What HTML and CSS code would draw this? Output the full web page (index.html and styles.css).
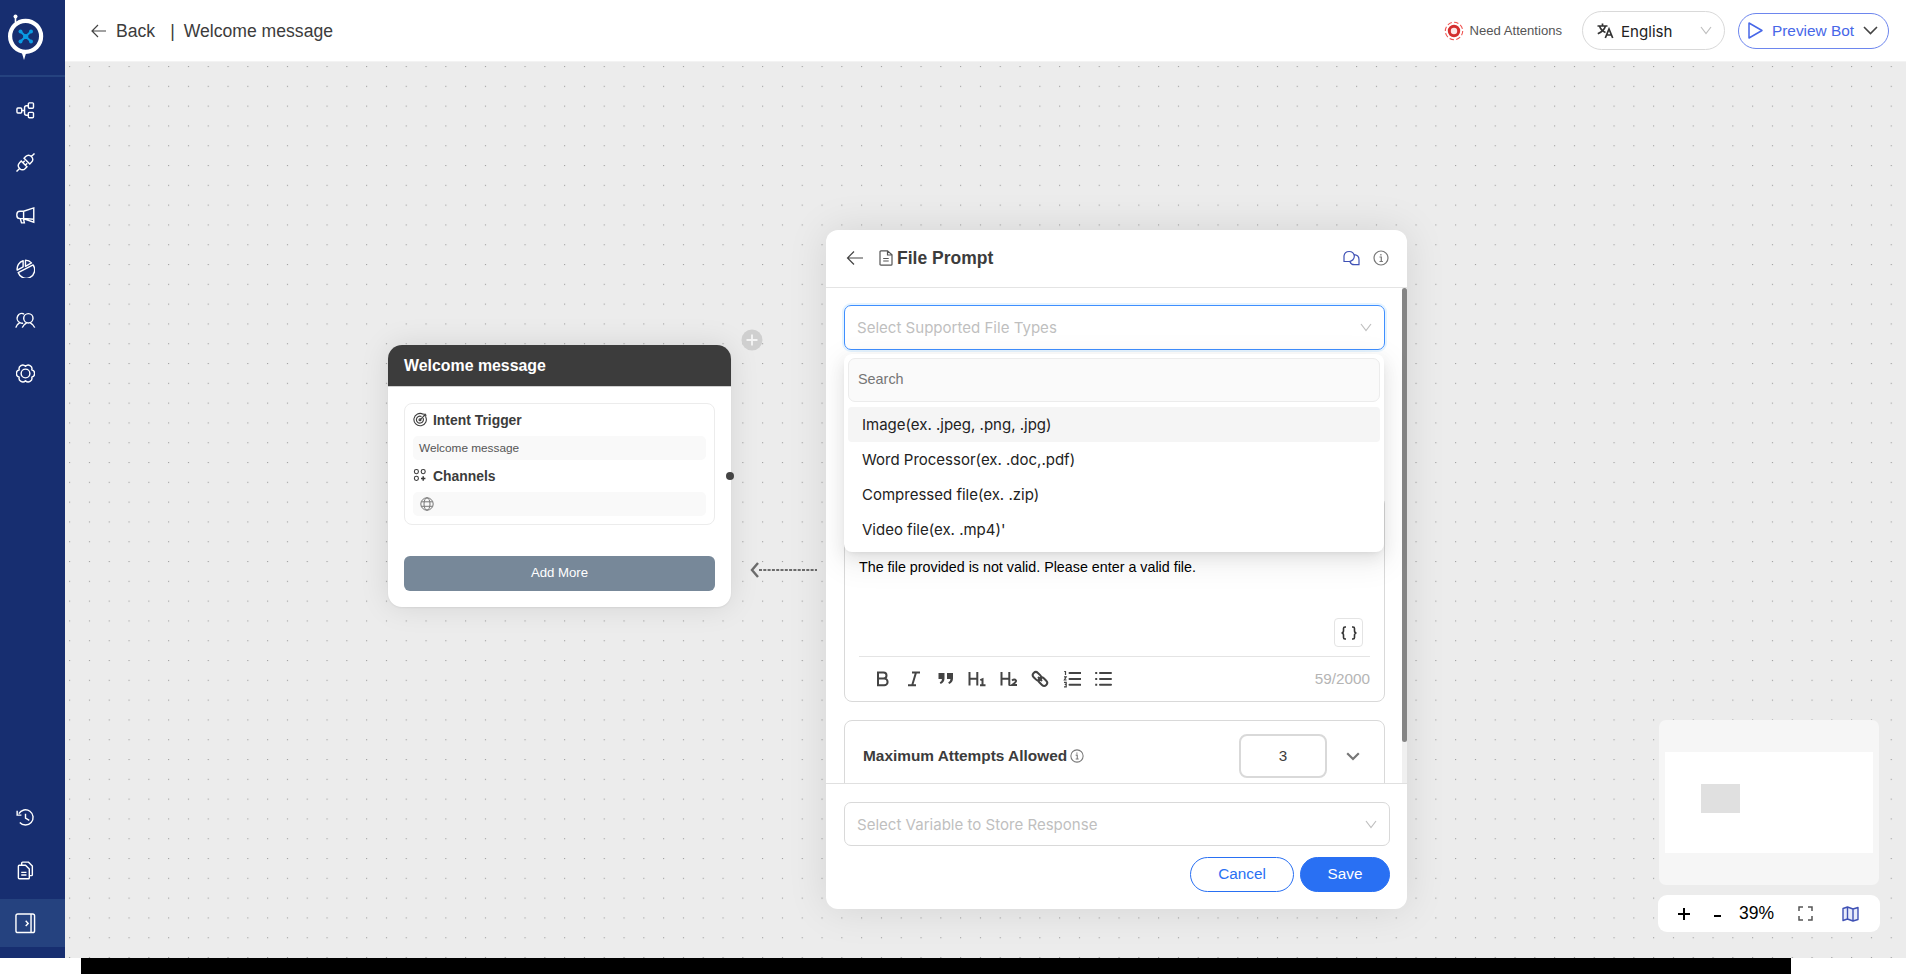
FILE: index.html
```html
<!DOCTYPE html>
<html lang="en">
<head>
    <meta charset="UTF-8">
    <meta name="viewport" content="width=device-width, initial-scale=1.0">
    <title>Welcome message</title>
    <link rel="stylesheet" href="styles.css">
</head>
<body>
    <div class="app">
        <nav class="sidebar">
            <div class="logo">
                <svg width="38" height="48" viewBox="0 0 38 48">
                    <path d="M8.5 3v8" stroke="#fff" stroke-width="1.6"/>
                    <circle cx="8.5" cy="2.5" r="2" fill="#fff"/>
                    <path d="M14 36l3 10 3-10z" fill="#fff"/>
                    <circle cx="18.6" cy="22.3" r="15.5" fill="#172e70" stroke="#fff" stroke-width="4.2"/>
                    <path d="M13.5 17.5l10.5 10M24 17.5l-10.5 10" stroke="#0a9be3" stroke-width="2"/>
                    <g fill="#0a9be3"><circle cx="13.5" cy="17.5" r="2"/><circle cx="24" cy="17.5" r="2"/><circle cx="13.5" cy="27.5" r="2"/><circle cx="24" cy="27.5" r="2"/><circle cx="18.7" cy="22.5" r="2.6"/></g>
                </svg>
            </div>
            <a class="nav-item"><svg class="icon" viewBox="0 0 20 20"><rect x="1" y="7.4" width="5" height="5.2" rx="1"/><rect x="13" y="2" width="5.4" height="5.6" rx="1"/><rect x="13" y="12" width="5.4" height="5.6" rx="1"/><path d="M6 10h3M13 5h-2q-2 0-2 2v6q0 2 2 2h2"/></svg></a>
            <a class="nav-item"><svg class="icon" viewBox="0 0 20 20"><path d="M.5 19.500L3.800 16.200M3.800 16.200q-3-3 0-6L5.500 8.500l6 6-1.700 1.700q-3 3-6 0zM19.500.5L16.200 3.800M16.200 3.800q-3-3-6 0L8.500 5.500l6 6 1.700-1.700q3-3 0-6zM7.200 10.200l2-2M9.800 12.800l2-2"/></svg></a>
            <a class="nav-item"><svg class="icon" viewBox="0 0 20 20"><path d="M8 5.500L18.700 2v15L8 13.300zM8 5.500H4.200a3.300 3.300 0 0 0-3.300 3.300v1.200a3.300 3.300 0 0 0 3.300 3.300H8M8 5.500v7.800M4.500 13.300l1.300 4.500h3l-1-4.500M8 13l10.500 1"/></svg></a>
            <a class="nav-item"><svg class="icon" viewBox="0 0 20 20"><path d="M2.300 14.300L18 6.300A8.900 8.900 0 1 1 2.300 14.300zM7.500 1.800V8.200L1.300 11.700A8.900 8.900 0 0 1 7.500 1.800zM10 7.800V1.200a8.900 8.900 0 0 1 6.300 2.900z" stroke-linejoin="round"/></svg></a>
            <a class="nav-item"><svg class="icon wide" viewBox="0 0 22 20"><circle cx="14" cy="7.700" r="4.900"/><path d="M7.600 17.500q1-3.300 4.600-5.100M20.700 17.500q-1-3.300-4.700-5.100M9.500 3.200A4.900 4.900 0 0 0 5 12.200Q1.600 14 .8 17.500M5 12.200q2 1 3.500.5"/></svg></a>
            <a class="nav-item"><svg class="icon" viewBox="0 0 20 20"><circle cx="10" cy="10" r="4.600"/><path d="M10 2.400A3.900 3.900 0 0 1 16.600 6.200A3.900 3.900 0 0 1 16.600 13.800A3.900 3.900 0 0 1 10 17.600A3.900 3.900 0 0 1 3.400 13.800A3.900 3.900 0 0 1 3.400 6.200A3.900 3.900 0 0 1 10 2.400z" stroke-linejoin="round"/></svg></a>
            <div class="nav-bottom">
                <a class="nav-item"><svg class="icon" viewBox="0 0 20 20"><path d="M4 15.200A8 8 0 1 0 3 6M1.200 3v4.500h4.500M10 6v4.700l4 2.300"/></svg></a>
                <a class="nav-item"><svg class="icon" viewBox="0 0 20 20"><path d="M2.500 5.500q0-1 1-1H10l4 4v9q0 1.200-1 1.200H3.500q-1 0-1-1zM6 4V2.200q0-1 1-1h6.200l4 4.200v9q0 1-1 1H14M5.500 12H11M5.500 14.800H11"/></svg></a>
                <a class="nav-item active"><svg class="icon collapse" viewBox="0 0 22 22"><rect x="1" y="1" width="19.500" height="19.500" rx="2"/><path d="M16.800 1v19.500M11.200 8.200l2.600 2.700-2.600 2.700"/></svg></a>
            </div>
        </nav>

        <div class="main">
            <header class="topbar">
                <svg class="back-arrow" width="16" height="14" viewBox="0 0 16 14"><path d="M15 7H1M7 1L1 7l6 6"/></svg>
                <span class="back">Back</span>
                <span class="bar">|</span>
                <span class="page-title">Welcome message</span>
                <div class="topbar-right">
                    <svg width="20" height="20" viewBox="0 0 20 20"><circle cx="10" cy="10" r="8.700" fill="none" stroke="#ef5350" stroke-width="1.100" stroke-dasharray="4.500 2.300"/><circle cx="10" cy="10" r="4.700" fill="#fde7e7" stroke="#d32f2f" stroke-width="3"/></svg>
                    <span class="attention">Need Attentions</span>
                    <div class="language">
                        <svg width="17" height="16" viewBox="0 0 17 16" fill="none" stroke="#333" stroke-width="1.700"><path d="M.5 3h10M5.500.5V3M2.500 3q1.500 4.500 6 6.500M8.500 3Q7 8 .8 10.800M8.300 15l3.700-9 3.700 9M9.500 12h5"/></svg>
                        <span>English</span>
                        <svg class="chevron" width="12" height="9" viewBox="0 0 12 9"><path d="M1 1l5 6.500L11 1"/></svg>
                    </div>
                    <div class="preview">
                        <svg width="15" height="17" viewBox="0 0 15 17" fill="none" stroke="#4767e8" stroke-width="1.500" stroke-linejoin="round"><path d="M1 1v15l13-7.500z"/></svg>
                        <span>Preview Bot</span>
                        <svg width="15" height="9" viewBox="0 0 15 9" fill="none" stroke="#444" stroke-width="1.600"><path d="M1 1l6.500 6.500L14 1"/></svg>
                    </div>
                </div>
            </header>

            <div class="canvas">
                <svg class="dots" width="1841" height="896">
                    <defs><pattern id="grid" x="4.100" y="4" width="19.800" height="19.800" patternUnits="userSpaceOnUse"><rect width="1.100" height="1.100" fill="#9c9c9c"/></pattern></defs>
                    <rect width="1841" height="896" fill="url(#grid)"/>
                </svg>

                <!-- Start node -->
                <div class="node">
                    <div class="node-head">Welcome message</div>
                    <div class="node-body">
                        <div class="node-box">
                            <div class="node-label"><svg class="small-icon" viewBox="0 0 15 15"><path d="M12.500 4.500a6.200 6.200 0 1 1-2.300-2.300M10 6a3.500 3.500 0 1 1-1.500-1.500M7 7.800l6-6M11 1.500v2.200h2.500"/><circle cx="7" cy="7.700" r="1"/></svg>Intent Trigger</div>
                            <div class="node-value">Welcome message</div>
                            <div class="node-label"><svg class="small-icon" viewBox="0 0 15 15"><rect x="1.400" y="1.500" width="4" height="4.200" rx="1.900"/><rect x="8.200" y="1.500" width="4" height="4.200" rx="1.900"/><rect x="1.400" y="8.300" width="4" height="4.200" rx="1.900"/><path d="M10.200 8.300v4.400M8 10.500h4.400" stroke-width="1.500"/></svg>Channels</div>
                            <div class="node-value"><svg class="globe" viewBox="0 0 14 14"><circle cx="7" cy="7" r="6.200"/><ellipse cx="7" cy="7" rx="3" ry="6.200"/><path d="M1.300 4.800h11.400M1.300 9.300h11.400"/></svg></div>
                        </div>
                        <div class="add-more">Add More</div>
                    </div>
                    <span class="handle"></span>
                </div>
                <svg class="plus" width="22" height="22" viewBox="0 0 22 22"><circle cx="11" cy="11" r="10.500" fill="#cfcfcf"/><path d="M11 5.500v11M5.500 11h11" stroke="#f4f4f4" stroke-width="1.800"/></svg>
                <svg class="link-arrow" width="68" height="18" viewBox="0 0 68 18"><path d="M8 2L2 9l6 7" fill="none" stroke="#6b6b6b" stroke-width="2.400"/><path d="M9 9h58" stroke="#6b6b6b" stroke-width="2" stroke-dasharray="3 1.300"/></svg>

                <!-- File prompt panel -->
                <section class="panel">
                    <div class="panel-head">
                        <svg class="back-arrow" width="18" height="14" viewBox="0 0 18 14"><path d="M17 7H1.500M8 .5L1.500 7 8 13.500"/></svg>
                        <svg class="doc" width="14" height="16" viewBox="0 0 14 16"><path d="M1 1.800q0-1 1-1h6.500l4.500 4v9.400q0 1-1 1H2q-1 0-1-1zM8.500 1v4H13M4.200 8.500h5.500M4.200 11h5.500"/></svg>
                        <h2>File Prompt</h2>
                        <svg class="chat" width="17" height="16" viewBox="0 0 17 16"><path d="M1 11.500V6a5.200 5.200 0 0 1 10.300 0 5.300 5.300 0 0 1-5 5.500zM11.500 4.700q4.500.5 4.500 5v5h-4.800q-3.200 0-4.200-3"/></svg>
                        <svg class="info" width="16" height="16" viewBox="0 0 16 16"><circle cx="8" cy="8" r="7"/><path d="M6.500 7H8.300v4.500M6.500 11.500h3.400M7.900 4v1.500"/></svg>
                    </div>
                    <div class="panel-body">
                        <div class="content">
                            <div class="select focused">
                                <span>Select Supported File Types</span>
                                <svg class="chevron" width="12" height="9" viewBox="0 0 12 9"><path d="M1 1l5 6.500L11 1"/></svg>
                                <div class="dropdown">
                                    <div class="search">Search</div>
                                    <div class="option selected">Image(ex. .jpeg, .png, .jpg)</div>
                                    <div class="option">Word Processor(ex. .doc,.pdf)</div>
                                    <div class="option">Compressed file(ex. .zip)</div>
                                    <div class="option">Video file(ex. .mp4)'</div>
                                </div>
                            </div>
                            <div class="editor">
                                <div class="editor-text">The file provided is not valid. Please enter a valid file.</div>
                                <div class="variable"><svg width="18" height="14" viewBox="0 0 18 14"><path d="M6 1H5q-1.500 0-1.500 1.500v2.300Q3.500 7 1.500 7q2 0 2 2.200v2.300Q3.500 13 5 13h1M12 1h1q1.500 0 1.500 1.500v2.300q0 2.200 2 2.200-2 0-2 2.200v2.300q0 1.500-1.500 1.500h-1"/></svg></div>
                                <div class="toolbar">
                                    <svg viewBox="0 0 18 18"><path d="M4 2.500h5.500a3 3 0 0 1 0 6H4zM4 8.500h6.200a3.400 3.400 0 0 1 0 6.800H4z"/></svg>
                                    <svg viewBox="0 0 18 18"><path d="M7 2.500h8M3 15.300h8M11 2.500L7.200 15.300"/></svg>
                                    <svg viewBox="0 0 18 18"><path d="M1.500 3h6v5.500q0 3.700-3.800 5.500l-1-1.500Q5 11 5 9H1.500zM10 3h6v5.500q0 3.700-3.800 5.500l-1-1.500q2.300-1.500 2.300-3.500H10z" fill="#444" stroke="none"/></svg>
                                    <svg viewBox="0 0 18 18"><path d="M1.500 2v13.500M9.300 2v13.500M1.500 8.800h7.800M12.300 10.200l2.200-1v6.300M12 15.200h5.500"/></svg>
                                    <svg viewBox="0 0 18 18"><path d="M1.500 2v13.500M9.300 2v13.500M1.500 8.800h7.800M12 10.500q2.500-2 4 0 .5 1.500-4 4.500h5"/></svg>
                                    <svg viewBox="0 0 18 18"><rect x="1.200" y="3.300" width="9.500" height="6" rx="3" transform="rotate(45 6 6.400)"/><rect x="7.200" y="8.700" width="9.500" height="6" rx="3" transform="rotate(45 12 11.600)"/><path d="M7 7l4 4"/></svg>
                                    <svg viewBox="0 0 18 18"><path d="M6.500 3H17.500M6.500 8.900H17.500M6.500 14.800H17.500" stroke-linecap="round"/><path d="M1.200 1.500h1.300V5M1 6.800h2.200L1.400 10h2.200M1 12.300h2.200v4.500H1M1.700 14.400h1.500" stroke-width="1.200"/></svg>
                                    <svg viewBox="0 0 18 18"><path d="M6 3H17M6 8.900H17M6 14.800H17" stroke-linecap="round"/><path d="M1.200 3h2M1.200 8.900h2M1.200 14.800h2"/></svg>
                                    <span class="count">59/2000</span>
                                </div>
                            </div>
                            <div class="attempts">
                                <b>Maximum Attempts Allowed</b>
                                <svg class="info" width="14" height="14" viewBox="0 0 16 16"><circle cx="8" cy="8" r="7"/><path d="M6.500 7H8.300v4.500M6.500 11.500h3.400M7.900 4v1.500"/></svg>
                                <div class="number">3</div>
                                <svg width="14" height="9" viewBox="0 0 14 9" fill="none" stroke="#777" stroke-width="2.200"><path d="M1.200 1.200L7 7l5.800-5.800"/></svg>
                            </div>
                        </div>
                        <div class="scroll"><div class="thumb"></div></div>
                    </div>
                    <div class="panel-foot">
                        <div class="select">
                            <span>Select Variable to Store Response</span>
                            <svg class="chevron" width="12" height="9" viewBox="0 0 12 9"><path d="M1 1l5 6.500L11 1"/></svg>
                        </div>
                        <div class="buttons">
                            <div class="btn">Cancel</div>
                            <div class="btn primary">Save</div>
                        </div>
                    </div>
                </section>

                <div class="map-tools">
                    <div class="minimap"><div class="viewport"><div class="mini-node"></div></div></div>
                    <div class="zoom">
                        <svg width="12" height="12" viewBox="0 0 12 12"><path d="M6 0v12M0 6h12" stroke="#000" stroke-width="2"/></svg>
                        <svg width="7" height="12" viewBox="0 0 7 12"><path d="M0 8h7" stroke="#000" stroke-width="2"/></svg>
                        <span>39%</span>
                        <svg width="15" height="15" viewBox="0 0 15 15" fill="none" stroke="#555" stroke-width="1.500"><path d="M1 5V1h4M10 1h4v4M14 10v4h-4M5 14H1v-4"/></svg>
                        <svg class="map" width="17" height="16" viewBox="0 0 17 16" fill="#e8ebfa" stroke="#3f51b5" stroke-width="1.400" stroke-linejoin="round"><path d="M1 2.500L5.500 1l5.500 2 5-1.500v12L11 15l-5.500-2L1 14.500zM5.500 1v12M11 3v12"/></svg>
                    </div>
                </div>
            </div>
        </div>
    </div>
    <div class="bottom-strip"></div>
</body>
</html>
```
FILE: styles.css
```css
* {
    box-sizing: border-box;
}

body {
    margin: 0;
    height: 974px;
    overflow: hidden;
    background: #fff;
    font-family: "Liberation Sans", Arial, sans-serif;
    color: #3c3c3c;
}

svg {
    display: block;
    flex: none;
}

span, b {
    white-space: nowrap;
}

.app {
    display: flex;
    height: 958px;
}

.bottom-strip {
    height: 16px;
    margin: 0 115px 0 81px;
    background: #000;
}

/* Sidebar */
.sidebar {
    width: 65px;
    background: #172e70;
    display: flex;
    flex-direction: column;
    padding-bottom: 11px;
}

.logo {
    height: 77px;
    padding: 14px 0 0 7px;
    border-bottom: 2px solid #25427f;
    margin-bottom: 9px;
}

.nav-item {
    height: 48px;
    margin-bottom: 4.700px;
    padding-left: 16px;
    display: flex;
    align-items: center;
}

.nav-item .icon {
    width: 19px;
    height: 19px;
    fill: none;
    stroke: #fff;
    stroke-width: 1.500;
}

.nav-item .icon.wide {
    width: 21px;
    margin-left: -1px;
}

.nav-item .icon.collapse {
    width: 21px;
    height: 21px;
    margin-left: -1px;
}

.nav-bottom {
    margin-top: auto;
}

.nav-item.active {
    background: #25427f;
    margin-bottom: 0;
}

/* Top bar */
.main {
    flex: 1;
    display: flex;
    flex-direction: column;
}

.topbar {
    height: 62px;
    display: flex;
    align-items: center;
    padding: 0 17px 0 26px;
    border-bottom: 1px solid #f3f3f3;
    font-size: 17.600px;
}

.back-arrow {
    fill: none;
    stroke: #444;
    stroke-width: 1.200;
}

.back {
    margin-left: 9px;
}

.bar {
    margin-left: 15px;
}

.page-title {
    margin-left: 9px;
}

.back, .bar, .page-title {
    padding-top: 2px;
}

.topbar-right {
    margin-left: auto;
    display: flex;
    align-items: center;
}

.attention {
    font-size: 13.100px;
    color: #555;
    margin: 0 20px 0 6px;
}

.language {
    width: 143px;
    height: 39px;
    border: 1px solid #d9d9d9;
    border-radius: 20px;
    display: flex;
    align-items: center;
    padding: 0 12px 0 14px;
    margin-right: 13px;
    font-family: Inter, sans-serif;
    font-size: 15.100px;
    color: #222;
}

.language span {
    margin: 1px auto 0 7px;
}

.chevron {
    fill: none;
    stroke: #bfbfbf;
    stroke-width: 1.200;
}

.preview {
    width: 151px;
    height: 36px;
    border: 1.500px solid #6d86ee;
    border-radius: 18px;
    display: flex;
    align-items: center;
    justify-content: space-between;
    padding: 0 10px 0 9px;
    font-size: 15.400px;
    color: #4767e8;
}

/* Canvas */
.canvas {
    flex: 1;
    position: relative;
    background: #ececec;
    overflow: hidden;
}

.dots {
    position: absolute;
    left: 0;
    top: 0;
}

.node {
    position: absolute;
    left: 323px;
    top: 283px;
    width: 343px;
    height: 262px;
    background: #fff;
    border-radius: 14px;
    box-shadow: 0 0 30px rgba(0, 0, 0, 0.1), 0 1px 2px rgba(0, 0, 0, 0.06);
}

.node-head {
    height: 42px;
    line-height: 42px;
    padding-left: 16px;
    background: #3c3c3c;
    border-radius: 14px 14px 0 0;
    color: #fff;
    font-size: 15.900px;
    font-weight: bold;
    border-bottom: 1px solid #d0d0d0;
}

.node-body {
    padding: 16px;
}

.node-box {
    height: 122px;
    border: 1px solid #ececec;
    border-radius: 8px;
    padding: 0 8px;
}

.node-label {
    height: 32px;
    padding-bottom: 1px;
    display: flex;
    align-items: center;
    gap: 5px;
    font-size: 13.900px;
    font-weight: bold;
}

.small-icon {
    width: 15px;
    height: 15px;
    fill: none;
    stroke: #3c3c3c;
    stroke-width: 1.100;
}

.node-value {
    height: 24px;
    display: flex;
    align-items: center;
    padding: 0 0 1px 6px;
    background: #f9f9f9;
    border-radius: 5px;
    font-size: 11.800px;
    color: #555;
}

.globe {
    width: 14px;
    height: 14px;
    margin-left: 1px;
    fill: none;
    stroke: #777;
}

.add-more {
    height: 35px;
    line-height: 34px;
    margin-top: 31px;
    background: #778899;
    border-radius: 6px;
    color: #fff;
    font-size: 13.200px;
    text-align: center;
}

.handle {
    position: absolute;
    right: -3px;
    top: 127px;
    width: 8px;
    height: 8px;
    border-radius: 50%;
    background: #444;
}

.plus {
    position: absolute;
    left: 675.500px;
    top: 266.500px;
}

.link-arrow {
    position: absolute;
    left: 685px;
    top: 499px;
}

/* Panel */
.panel {
    position: absolute;
    left: 761px;
    top: 168px;
    width: 581px;
    height: 679px;
    background: #fff;
    border-radius: 12px;
    box-shadow: 0 0 40px rgba(0, 0, 0, 0.1);
    display: flex;
    flex-direction: column;
}

.panel-head {
    height: 58px;
    border-bottom: 1px solid #e4e4e4;
    display: flex;
    align-items: center;
    padding: 0 18px 1px 20px;
}

.panel-head h2 {
    margin: 0 auto 0 4px;
    font-size: 17.500px;
}

.doc {
    margin-left: 15px;
    fill: none;
    stroke: #555;
    stroke-width: 1.200;
}

.chat {
    fill: none;
    stroke: #3f51b5;
    stroke-width: 1.200;
    margin-right: 13px;
}

.info {
    fill: none;
    stroke: #777;
    stroke-width: 1.200;
}

.panel-body {
    height: 495px;
    display: flex;
    overflow: hidden;
}

.content {
    flex: 1;
    padding: 17px 17px 0 18px;
}

.scroll {
    width: 5px;
    background: #f0f0f0;
}

.thumb {
    height: 454px;
    border-radius: 3px;
    background: #858585;
}

.select {
    position: relative;
    height: 44px;
    border: 1px solid #d9d9d9;
    border-radius: 7px;
    padding: 0 12px;
    display: flex;
    align-items: center;
    justify-content: space-between;
    font-family: Inter, sans-serif;
    font-size: 15.050px;
    color: #bfbfbf;
}

.select.focused {
    height: 45px;
    border: 1.500px solid #3f8fff;
    box-shadow: 0 0 0 2px rgba(5, 145, 255, 0.1);
}

.dropdown {
    position: absolute;
    left: -1px;
    top: 48px;
    width: 540px;
    height: 198px;
    padding: 4px;
    background: #fff;
    border-radius: 8px;
    box-shadow: 0 6px 16px rgba(0, 0, 0, 0.08), 0 3px 6px -4px rgba(0, 0, 0, 0.12), 0 9px 28px 8px rgba(0, 0, 0, 0.05);
    z-index: 1;
}

.search {
    height: 44px;
    line-height: 41px;
    margin-bottom: 5px;
    padding-left: 9px;
    background: #fafafa;
    border: 1px solid #ececec;
    border-radius: 7px;
    font-family: "Liberation Sans", Arial, sans-serif;
    font-size: 14.400px;
    color: #757575;
}

.option {
    height: 35.100px;
    line-height: 35px;
    padding-left: 14px;
    border-radius: 4px;
    font-size: 15px;
    color: #222;
}

.option.selected {
    background: #f5f5f5;
}

.editor {
    height: 206px;
    margin-top: 146px;
    padding: 60px 14px 0;
    border: 1px solid #d9d9d9;
    border-radius: 8px;
}

.editor-text {
    height: 61px;
    line-height: 20px;
    font-size: 14.300px;
    color: #000;
}

.variable {
    width: 29px;
    height: 29px;
    margin: 0 7px 9px auto;
    border: 1px solid #e4e4e4;
    border-radius: 4px;
    display: flex;
    align-items: center;
    justify-content: center;
}

.variable svg {
    fill: none;
    stroke: #333;
    stroke-width: 1.600;
}

.toolbar {
    height: 45px;
    border-top: 1px solid #e4e4e4;
    display: flex;
    align-items: center;
    gap: 13.500px;
    padding-left: 14.500px;
}

.toolbar svg {
    width: 18px;
    height: 18px;
    fill: none;
    stroke: #444;
    stroke-width: 2;
}

.count {
    margin-left: auto;
    font-size: 15.300px;
    color: #b5b5b5;
}

.attempts {
    height: 72px;
    margin-top: 18px;
    padding: 0 24px 0 18px;
    border: 1px solid #d9d9d9;
    border-radius: 8px;
    display: flex;
    align-items: center;
}

.attempts b {
    font-size: 15.400px;
}

.attempts .info {
    margin-left: 3px;
}

.number {
    width: 88px;
    height: 44px;
    line-height: 40px;
    margin: 0 19px 0 auto;
    border: 2px solid #d9d9d9;
    border-radius: 8px;
    font-size: 15.200px;
    text-align: center;
}

.panel-foot {
    flex: 1;
    border-top: 1px solid #e0e0e0;
    padding: 18px 17px 0 18px;
}

.buttons {
    display: flex;
    justify-content: flex-end;
    gap: 6px;
    margin-top: 11px;
}

.btn {
    width: 104px;
    height: 35px;
    line-height: 32px;
    border: 1px solid #2970f3;
    border-radius: 18px;
    color: #2970f3;
    font-size: 15.300px;
    text-align: center;
}

.btn.primary {
    width: 90px;
    background: #2970f3;
    color: #fff;
}

/* Minimap and zoom controls */
.map-tools {
    position: absolute;
    right: 26px;
    bottom: 26px;
    width: 222px;
}

.minimap {
    height: 165px;
    margin: 0 1px 10px;
    padding: 32px 6px;
    background: #f6f6f6;
    border-radius: 7px;
}

.viewport {
    height: 101px;
    padding: 32px 0 0 36px;
    background: #fff;
}

.mini-node {
    width: 39px;
    height: 29px;
    background: #e0e0e0;
}

.zoom {
    height: 37px;
    display: flex;
    align-items: center;
    padding: 0 21px 0 20px;
    background: #fff;
    border-radius: 9px;
    font-size: 17.500px;
    color: #000;
}

.zoom svg + svg {
    margin-left: 24px;
}

.zoom span {
    margin: 0 24px 0 18px;
}

.zoom .map {
    margin-left: auto;
}
```
